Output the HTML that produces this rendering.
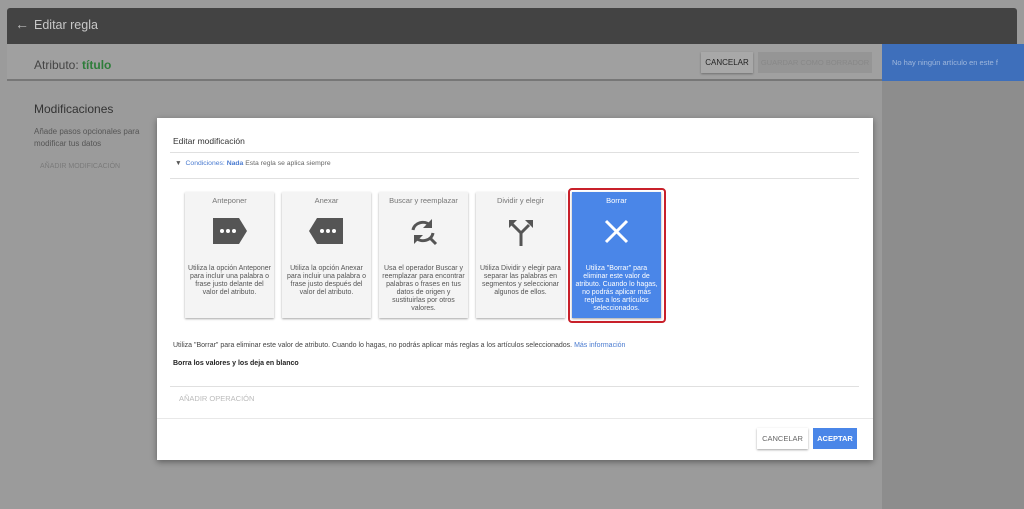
<!DOCTYPE html><html><head><style>
*{margin:0;padding:0;box-sizing:border-box}
body{width:1024px;height:509px;background:#9b9b9b;font-family:"Liberation Sans",sans-serif;position:relative;overflow:hidden;color:#333}
.abs{position:absolute}
.card{position:absolute;top:192px;width:89px;height:126px;background:#f4f4f4;box-shadow:0 1px 2px rgba(0,0,0,.35);text-align:center;font-size:7px;color:#555;line-height:8px}
.card .t{position:absolute;top:5px;left:0;right:0;color:#777;font-size:7.5px}
.card .d{position:absolute;top:73px;left:3px;right:3px}
.card svg{position:absolute;top:25px;left:26px}
</style></head><body>
<div class="abs" style="left:7px;top:8px;width:1010px;height:36px;background:#434343;border-radius:3px 3px 0 0"></div>
<div class="abs" style="left:15px;top:16px;color:#bbb;font-size:14px">&#8592;</div>
<div class="abs" style="left:34px;top:18px;color:#c8c8c8;font-size:12.5px">Editar regla</div>
<div class="abs" style="left:7px;top:44px;width:875px;height:37px;background:#a0a0a0;border-bottom:2px solid #777"></div>
<div class="abs" style="left:34px;top:58px;font-size:12px;color:#444">Atributo: <b style="color:#2e7d3a">título</b></div>
<div class="abs" style="left:701px;top:52px;width:52px;height:21px;background:#a8a8a8;box-shadow:0 1px 2px rgba(0,0,0,.3);font-size:8px;color:#222;text-align:center;line-height:21px">CANCELAR</div>
<div class="abs" style="left:758px;top:52px;width:114px;height:21px;background:#959595;font-size:7.5px;color:#888;text-align:center;line-height:21px">GUARDAR COMO BORRADOR</div>
<div class="abs" style="left:882px;top:44px;width:142px;height:37px;background:#3e6fbb;color:#9fb7dc;font-size:7.5px;padding:14px 0 0 10px;white-space:nowrap">No hay ningún artículo en este f</div>
<div class="abs" style="left:882px;top:81px;width:142px;height:428px;background:#8d8d8d"></div>
<div class="abs" style="left:34px;top:102px;font-size:12px;color:#333">Modificaciones</div>
<div class="abs" style="left:34px;top:126px;font-size:8px;color:#555;line-height:12px;width:120px">Añade pasos opcionales para modificar tus datos</div>
<div class="abs" style="left:40px;top:163px;font-size:7px;color:#7a7a7a">AÑADIR MODIFICACIÓN</div>
<div class="abs" style="left:157px;top:118px;width:716px;height:342px;background:#fff;box-shadow:0 2px 6px rgba(0,0,0,.4)"></div>
<div class="abs" style="left:173px;top:136px;font-size:8.5px;color:#333">Editar modificación</div>
<div class="abs" style="left:170px;top:152px;width:689px;height:1px;background:#e0e0e0"></div>
<div class="abs" style="left:175px;top:160px;font-size:6.8px;color:#666"><span style="color:#555">&#9660;</span>&nbsp; <span style="color:#4a7bd0">Condiciones: <b>Nada</b></span> Esta regla se aplica siempre</div>
<div class="abs" style="left:170px;top:178px;width:689px;height:1px;background:#e0e0e0"></div>
<div class="card" style="left:185px"><div class="t">Anteponer</div><svg width="37" height="28" viewBox="0 0 37 28"><path d="M2 1h26l8 13-8 13H2z" fill="#555"/><circle cx="11" cy="14" r="2" fill="#fff"/><circle cx="17" cy="14" r="2" fill="#fff"/><circle cx="23" cy="14" r="2" fill="#fff"/></svg><div class="d">Utiliza la opción Anteponer para incluir una palabra o frase justo delante del valor del atributo.</div></div>
<div class="card" style="left:282px"><div class="t">Anexar</div><svg width="37" height="28" viewBox="0 0 37 28"><path d="M35 1H9L1 14l8 13h26z" fill="#555"/><circle cx="14" cy="14" r="2" fill="#fff"/><circle cx="20" cy="14" r="2" fill="#fff"/><circle cx="26" cy="14" r="2" fill="#fff"/></svg><div class="d">Utiliza la opción Anexar para incluir una palabra o frase justo después del valor del atributo.</div></div>
<div class="card" style="left:379px"><div class="t">Buscar y reemplazar</div><svg width="37" height="30" viewBox="0 0 37 30"><path d="M8 13a10 9 0 0 1 17-5" stroke="#555" stroke-width="3" fill="none"/><path d="M27 2v9h-9z" fill="#555"/><path d="M28 16a10 9 0 0 1-17 5" stroke="#555" stroke-width="3" fill="none"/><path d="M9 27v-9h9z" fill="#555"/><path d="M25 21l6 6" stroke="#555" stroke-width="3"/></svg><div class="d">Usa el operador Buscar y reemplazar para encontrar palabras o frases en tus datos de origen y sustituirlas por otros valores.</div></div>
<div class="card" style="left:476px"><div class="t">Dividir y elegir</div><svg width="37" height="30" viewBox="0 0 37 30"><path d="M19 29V16L10 7M19 16l8-8" stroke="#555" stroke-width="3" fill="none"/><path d="M7 3h8l-8 8z" fill="#555"/><path d="M31 3h-8l8 8z" fill="#555"/></svg><div class="d">Utiliza Dividir y elegir para separar las palabras en segmentos y seleccionar algunos de ellos.</div></div>
<div class="abs" style="left:568px;top:188px;width:98px;height:135px;border:2px solid #c8202a;border-radius:4px"></div>
<div class="card" style="left:572px;background:#4a86e8;color:#fff"><div class="t" style="color:#fff">Borrar</div><svg width="37" height="30" viewBox="0 0 37 30"><path d="M8 4l21 21M29 4L8 25" stroke="#fff" stroke-width="3"/></svg><div class="d">Utiliza "Borrar" para eliminar este valor de atributo. Cuando lo hagas, no podrás aplicar más reglas a los artículos seleccionados.</div></div>
<div class="abs" style="left:173px;top:342px;font-size:7px;color:#444">Utiliza "Borrar" para eliminar este valor de atributo. Cuando lo hagas, no podrás aplicar más reglas a los artículos seleccionados. <span style="color:#4a7bd0">Más información</span></div>
<div class="abs" style="left:173px;top:360px;font-size:7px;color:#222;font-weight:bold">Borra los valores y los deja en blanco</div>
<div class="abs" style="left:170px;top:386px;width:689px;height:1px;background:#e0e0e0"></div>
<div class="abs" style="left:179px;top:394px;font-size:7.5px;color:#bbb">AÑADIR OPERACIÓN</div>
<div class="abs" style="left:157px;top:418px;width:716px;height:1px;background:#e8e8e8"></div>
<div class="abs" style="left:757px;top:428px;width:51px;height:21px;background:#fff;box-shadow:0 1px 2px rgba(0,0,0,.35);font-size:7.5px;color:#666;text-align:center;line-height:21px">CANCELAR</div>
<div class="abs" style="left:813px;top:428px;width:44px;height:21px;background:#4a86e8;font-size:7.5px;color:#fff;font-weight:bold;text-align:center;line-height:21px">ACEPTAR</div>
</body></html>
